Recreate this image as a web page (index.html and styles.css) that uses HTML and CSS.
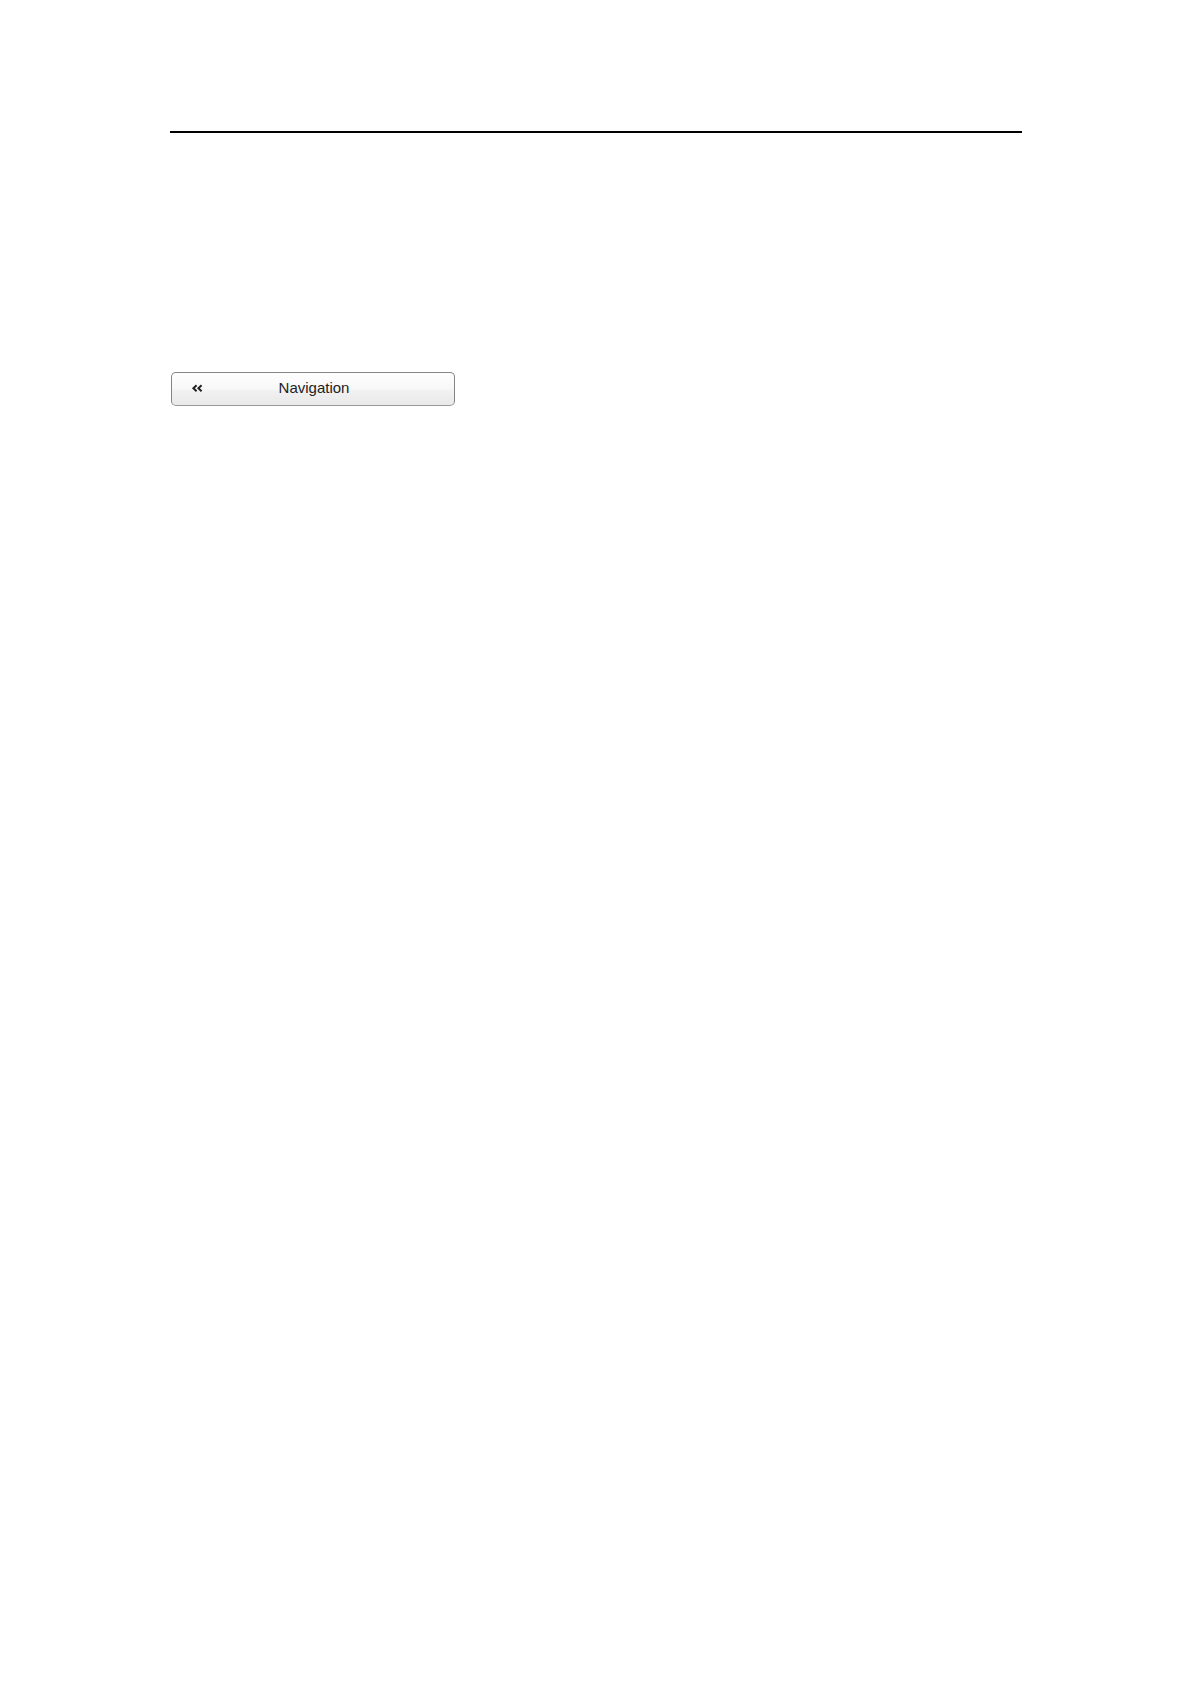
FILE: index.html
```
<!DOCTYPE html>
<html lang="en">
<head>
    <meta charset="utf-8">
    <title>Navigation</title>
    <link rel="stylesheet" href="styles.css">
</head>
<body>
    <div class="page">
        <hr class="rule">
        <button type="button" class="nav-button">
            <svg class="nav-icon" width="12" height="10" viewBox="0 0 12 10" aria-hidden="true">
                <path d="M5.6 2.2 L2.4 5.2 L5.6 8.2 M10.6 2.2 L7.4 5.2 L10.6 8.2" />
            </svg>
            <span class="nav-label">Navigation</span>
        </button>
    </div>
</body>
</html>
```

FILE: styles.css
```
* { box-sizing: border-box; }
body { margin: 0; background: #fff; color: #222; font-family: "Liberation Sans", Arial, sans-serif; }
.page { padding: 131px 169px 40px 170px; }
.rule { height: 2px; margin: 0 0 239px; border: 0; background: #000; }

.nav-button {
    display: grid;
    grid-template-columns: 20px 1fr 18px;
    align-items: center;
    width: 284px;
    height: 34px;
    margin-left: 1px;
    padding: 0 19px 3px;
    border: 1px solid #858585;
    border-bottom-color: #999;
    border-radius: 5px;
    background: linear-gradient(#fefefe 0%, #f8f8f8 48%, #f1f1f1 56%, #e9e9e9 100%);
    color: inherit;
    font: 15px/20px "Liberation Sans", Arial, sans-serif;
    cursor: pointer;
}
.nav-icon { fill: none; stroke: #222; stroke-width: 2; }
.nav-label { text-align: center; }
```
